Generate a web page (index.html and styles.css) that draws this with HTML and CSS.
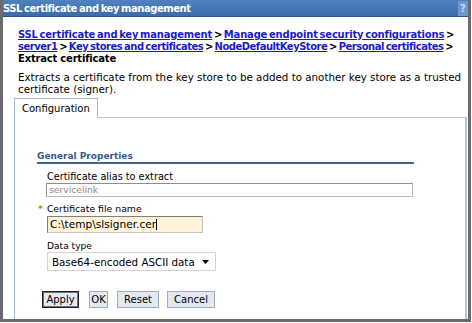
FILE: index.html
```html
<!DOCTYPE html>
<html>
<head>
<meta charset="utf-8">
<link rel="stylesheet" href="styles.css">
</head>
<body>
<div class="win">
  <div class="titlebar">
    <span class="title">SSL certificate and key management</span>
    <span class="help">?</span>
  </div>
  <div class="content">
    <div class="crumbs">
      <div class="l1"><a href="#">SSL certificate and key management</a> &gt; <a href="#">Manage endpoint security configurations</a> &gt;</div>
      <div class="l2"><a href="#">server1</a> &gt; <a href="#">Key stores and certificates</a> &gt; <a href="#">NodeDefaultKeyStore</a> &gt; <a href="#">Personal certificates</a> &gt;</div>
      <div class="current">Extract certificate</div>
    </div>
    <p class="desc">Extracts a certificate from the key store to be added to another key store as a trusted certificate (signer).</p>
    <div class="tabs">
      <div class="tab">Configuration</div>
      <div class="tabfill"></div>
    </div>
    <div class="panel">
      <div class="section">General Properties</div>
      <div class="field f1">
        <label class="lbl">Certificate alias to extract</label>
        <div class="input disabled">servicelink</div>
      </div>
      <div class="field f2">
        <label class="lbl"><span class="req">*</span>Certificate file name</label>
        <div class="input file">C:\temp\slsigner.cer<span class="caret"></span></div>
      </div>
      <div class="field f3">
        <label class="lbl">Data type</label>
        <div class="select"><span>Base64-encoded ASCII data</span><svg class="arrow" width="7" height="4" viewBox="0 0 7 4"><path d="M0 0h7L3.5 4z" fill="#000"/></svg></div>
      </div>
      <div class="buttons">
        <span class="btn focus b-apply">Apply</span>
        <span class="btn b-ok">OK</span>
        <span class="btn b-reset">Reset</span>
        <span class="btn b-cancel">Cancel</span>
      </div>
    </div>
  </div>
</div>
</body>
</html>
```
FILE: styles.css
```css
html, body { margin: 0; padding: 0; background: #fff; }
body { font-family: "DejaVu Sans", Verdana, sans-serif; font-size: 10px; color: #000; }
* { box-sizing: border-box; }
.win {
  width: 471px; height: 322px;
  border-left: 3px solid #6a6a6a;
  border-right: 3px solid #6a6a6a;
  border-bottom: 3px solid #6a6a6a;
  display: flex; flex-direction: column;
  overflow: hidden;
}
.titlebar {
  height: 17px; flex: none;
  background: linear-gradient(#4f82bf, #3b6ca9);
  display: flex; align-items: center; justify-content: space-between;
  border-bottom: 1px solid #2c5587;
}
.title { color: #fff; font-weight: bold; font-size: 10px; letter-spacing: -0.45px; word-spacing: -1px; }
.help {
  width: 10px; height: 15px; line-height: 15px;
  color: #c9dcf3; font-weight: bold; font-size: 10px; text-align: center;
  background: #6d9ad1;
}
.content { padding: 12px 0 0 11px; flex: 1; display: flex; flex-direction: column; }
.crumbs { font-weight: bold; line-height: 12px; font-size: 10px; white-space: nowrap; padding-left: 4px; }
.l1 { letter-spacing: -0.2px; word-spacing: -1.5px; }
.l2 { letter-spacing: -0.5px; word-spacing: -1.2px; }
.crumbs a { color: #1c1cc4; }
.current { color: #000; letter-spacing: -0.2px; }
.desc { margin: 6px 0 0 4px; line-height: 12px; width: 452px; font-size: 10.3px; }
.tabs { display: flex; height: 20px; flex: none; margin-top: 3px; }
.tab {
  width: 84px; padding-left: 7px; line-height: 19px; font-size: 10px;
  border: 1px solid #a9b9d6; border-bottom: none;
}
.tabfill { flex: 1; border-bottom: 1px solid #b7c5de; margin-right: 1px; }
.panel {
  flex: 1;
  margin-right: 1px;
  border-left: 1px solid #a9b9d6; border-right: 2px solid #b4c2dc;
  padding: 33px 0 0 22px;
}
.section {
  width: 377px; color: #34598a; font-weight: bold; font-size: 9px;
  border-bottom: 2px solid #3d6590; line-height: 11px;
}
.field { margin-left: 10px; }
.lbl { display: block; line-height: 12px; font-size: 9.7px; }
.f1 .lbl { margin-top: 7px; }
.f2 .lbl { margin-top: 6px; padding-left: 1px; font-size: 9.3px; }
.f3 .lbl { margin-top: 8px; line-height: 11px; font-size: 9.1px; }
.req { color: #a69600; margin-left: -10px; margin-right: 4px; font-weight: bold; }
.input { padding: 0 2px; }
.disabled {
  margin-left: -1px; width: 367px; height: 14px; line-height: 12px; font-size: 9.2px;
  color: #8a8a8a; border: 1px solid #8f8f8f; border-right-color: #b8b8b8; border-bottom-color: #b8b8b8;
}
.file {
  margin-top: 1px; width: 156px; height: 17px; line-height: 15px; font-size: 10.6px;
  background: #fff4d8; border: 1px solid #c4c4c4; border-top-color: #7e7e7e; border-left-color: #7e7e7e;
}
.caret { display: inline-block; width: 1px; height: 11px; background: #000; vertical-align: -2px; }
.select {
  width: 169px; height: 19px; padding-left: 4px; font-size: 10.3px;
  border: 1px solid #d4d4d4; display: flex; justify-content: space-between; align-items: center;
}
.arrow { margin-right: 6px; }
.buttons { display: flex; margin-top: 20px; margin-left: 5px; }
.btn {
  height: 17px; line-height: 15px; font-size: 10px; text-align: center;
  background: #e3e8f1; border: 1px solid #a3abba;
}
.b-apply { width: 37px; }
.b-ok { width: 19px; margin-left: 10px; }
.b-reset { width: 42px; margin-left: 9px; }
.b-cancel { width: 48px; margin-left: 8px; }
.btn.focus { border: 1px solid #1e1e1e; box-shadow: inset 0 0 0 1px #707070; }
```
